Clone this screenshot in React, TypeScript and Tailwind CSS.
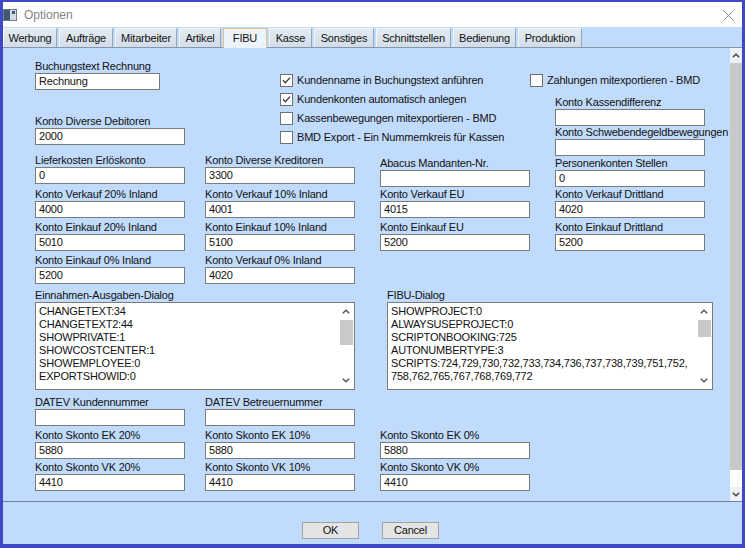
import React from "react";

type FieldProps = { label: string; value?: string; inputW?: string; className?: string };

function Field({ label, value = "", inputW = "w-[150px]", className = "" }: FieldProps) {
  return (
    <div className={`flex flex-col w-[150px] shrink-0 ${className}`}>
      <div className="h-[13px] leading-[13px] whitespace-nowrap">{label}</div>
      <div
        className={`h-[17px] ${inputW} bg-white border border-[#7b7b7b] pl-[3px] leading-[15px] whitespace-nowrap overflow-hidden`}
      >
        {value}
      </div>
    </div>
  );
}

function Check({ label, checked = false }: { label: string; checked?: boolean }) {
  return (
    <div className="flex items-center h-[19px] whitespace-nowrap">
      <div className="w-[13px] h-[13px] bg-white border border-[#707070] flex items-center justify-center shrink-0">
        {checked && (
          <svg width="11" height="11" viewBox="0 0 11 11">
            <path d="M2 5.2 L4.4 7.8 L9 2.6" fill="none" stroke="#3a3a3a" strokeWidth="1.3" />
          </svg>
        )}
      </div>
      <span className="ml-[4px] leading-[13px]">{label}</span>
    </div>
  );
}

function ChevUp({ color = "#505050" }: { color?: string }) {
  return (
    <svg width="8" height="5" viewBox="0 0 8 5">
      <path d="M0.8 4.3 L4 1.2 L7.2 4.3" fill="none" stroke={color} strokeWidth="1.4" />
    </svg>
  );
}
function ChevDown({ color = "#505050" }: { color?: string }) {
  return (
    <svg width="8" height="5" viewBox="0 0 8 5">
      <path d="M0.8 0.7 L4 3.8 L7.2 0.7" fill="none" stroke={color} strokeWidth="1.4" />
    </svg>
  );
}

function TextArea({
  label,
  lines,
  w,
  thumbH,
}: {
  label: string;
  lines: string[];
  w: string;
  thumbH: string;
}) {
  return (
    <div className="flex flex-col shrink-0">
      <div className="h-[13px] leading-[13px] whitespace-nowrap">{label}</div>
      <div className={`h-[88px] ${w} bg-white border border-[#7b7b7b] flex`}>
        <div className="flex-1 pl-[3px] pt-[2px] leading-[13px] overflow-hidden whitespace-nowrap">
          {lines.map((l, i) => (
            <div key={i}>{l}</div>
          ))}
        </div>
        <div className="w-[16px] flex flex-col items-center shrink-0">
          <div className="h-[17px] flex items-center justify-center">
            <ChevUp />
          </div>
          <div className={`${thumbH} w-[13px] bg-[#c9c9c9]`} />
          <div className="flex-1" />
          <div className="h-[17px] flex items-center justify-center">
            <ChevDown />
          </div>
        </div>
      </div>
    </div>
  );
}

const tabs: { name: string; w: string; active?: boolean }[] = [
  { name: "Werbung", w: "w-[54px]" },
  { name: "Aufträge", w: "w-[54px]" },
  { name: "Mitarbeiter", w: "w-[62px]" },
  { name: "Artikel", w: "w-[42px]" },
  { name: "FIBU", w: "w-[44px]", active: true },
  { name: "Kasse", w: "w-[43px]" },
  { name: "Sonstiges", w: "w-[60px]" },
  { name: "Schnittstellen", w: "w-[75px]" },
  { name: "Bedienung", w: "w-[63px]" },
  { name: "Produktion", w: "w-[64px]" },
];

export default function App() {
  return (
    <div className="font-['Liberation_Sans',Arial,sans-serif] text-[11px] tracking-[-0.2px] text-[#111] w-[745px] h-[548px] bg-[#4048c8] pt-[2px] px-[3px] pb-[4px] flex flex-col">
      {/* Title bar */}
      <div className="h-[25px] bg-white flex items-center shrink-0">
        <svg width="14" height="12" viewBox="0 0 14 12">
          <rect x="0.5" y="0.5" width="13" height="11" fill="#d4dde6" stroke="#6c7c8c" />
          <rect x="1" y="1" width="6" height="10" fill="#3e5a72" />
          <rect x="9" y="2" width="3" height="3" fill="#44586a" />
        </svg>
        <span className="ml-[7px] text-[12px] tracking-normal text-[#858585] leading-[14px]">Optionen</span>
        <svg width="11" height="11" viewBox="0 0 11 11" className="ml-auto mr-[8px] mt-[2px]">
          <path d="M0.5 0.5 L10.5 10.5 M10.5 0.5 L0.5 10.5" stroke="#8a8a8a" strokeWidth="1" />
        </svg>
      </div>

      {/* Tab strip */}
      <div className="h-[21px] bg-[#c1dbfc] border-b border-[#8595ab] pt-[1px] flex gap-[2px] shrink-0">
        {tabs.map((t) =>
          t.active ? (
            <div
              key={t.name}
              className={`${t.w} h-[20px] bg-[#edf3fb] border-l border-r border-t border-[#e3c48c] flex items-center justify-center leading-[13px] relative`}
            >
              {t.name}
            </div>
          ) : (
            <div
              key={t.name}
              className={`${t.w} h-[19px] bg-gradient-to-b from-[#e3eaf2] to-[#d3dde8] border-l border-t border-[#f2f5f9] border-r border-r-[#98a6b6] flex items-center justify-center leading-[13px]`}
            >
              {t.name}
            </div>
          )
        )}
      </div>

      {/* Content + scrollbar */}
      <div className="flex h-[453px] bg-[#c1dbfc] shrink-0">
        <div className="flex-1 overflow-hidden pl-[32px] pt-[12px]">
          {/* Top section */}
          <div className="flex h-[94px]">
            <div className="w-[150px] flex flex-col shrink-0">
              <Field label="Buchungstext Rechnung" value="Rechnung" inputW="w-[125px]" />
              <Field label="Konto Diverse Debitoren" value="2000" className="mt-[25px]" />
            </div>
            <div className="ml-[95px] w-[250px] pt-[11px] shrink-0">
              <Check label="Kundenname in Buchungstext anführen" checked />
              <Check label="Kundenkonten automatisch anlegen" checked />
              <Check label="Kassenbewegungen mitexportieren - BMD" />
              <Check label="BMD Export - Ein Nummernkreis für Kassen" />
            </div>
            <div className="pt-[11px] shrink-0">
              <Check label="Zahlungen mitexportieren - BMD" />
              <div className="ml-[25px] mt-[6px]">
                <Field label="Konto Kassendifferenz" />
                <Field label="Konto Schwebendegeldbewegungen" />
              </div>
            </div>
          </div>

          {/* Rows */}
          <div className="flex items-start">
            <Field label="Lieferkosten Erlöskonto" value="0" />
            <Field label="Konto Diverse Kreditoren" value="3300" className="ml-[20px]" />
            <Field label="Abacus Mandanten-Nr." className="ml-[25px] mt-[3px]" />
            <Field label="Personenkonten Stellen" value="0" className="ml-[25px] mt-[3px]" />
          </div>
          <div className="flex mt-[1px]">
            <Field label="Konto Verkauf 20% Inland" value="4000" />
            <Field label="Konto Verkauf 10% Inland" value="4001" className="ml-[20px]" />
            <Field label="Konto Verkauf EU" value="4015" className="ml-[25px]" />
            <Field label="Konto Verkauf Drittland" value="4020" className="ml-[25px]" />
          </div>
          <div className="flex mt-[3px]">
            <Field label="Konto Einkauf 20% Inland" value="5010" />
            <Field label="Konto Einkauf 10% Inland" value="5100" className="ml-[20px]" />
            <Field label="Konto Einkauf EU" value="5200" className="ml-[25px]" />
            <Field label="Konto Einkauf Drittland" value="5200" className="ml-[25px]" />
          </div>
          <div className="flex mt-[3px]">
            <Field label="Konto Einkauf 0% Inland" value="5200" />
            <Field label="Konto Verkauf 0% Inland" value="4020" className="ml-[20px]" />
          </div>

          {/* Text areas */}
          <div className="flex mt-[5px]">
            <TextArea
              label="Einnahmen-Ausgaben-Dialog"
              w="w-[320px]"
              thumbH="h-[25px]"
              lines={[
                "CHANGETEXT:34",
                "CHANGETEXT2:44",
                "SHOWPRIVATE:1",
                "SHOWCOSTCENTER:1",
                "SHOWEMPLOYEE:0",
                "EXPORTSHOWID:0",
              ]}
            />
            <div className="ml-[32px]">
              <TextArea
                label="FIBU-Dialog"
                w="w-[326px]"
                thumbH="h-[17px]"
                lines={[
                  "SHOWPROJECT:0",
                  "ALWAYSUSEPROJECT:0",
                  "SCRIPTONBOOKING:725",
                  "AUTONUMBERTYPE:3",
                  "SCRIPTS:724,729,730,732,733,734,736,737,738,739,751,752,",
                  "758,762,765,767,768,769,772",
                ]}
              />
            </div>
          </div>

          {/* Bottom rows */}
          <div className="flex mt-[6px]">
            <Field label="DATEV Kundennummer" />
            <Field label="DATEV Betreuernummer" className="ml-[20px]" />
          </div>
          <div className="flex mt-[3px]">
            <Field label="Konto Skonto EK 20%" value="5880" />
            <Field label="Konto Skonto EK 10%" value="5880" className="ml-[20px]" />
            <Field label="Konto Skonto EK 0%" value="5880" className="ml-[25px]" />
          </div>
          <div className="flex mt-[2px]">
            <Field label="Konto Skonto VK 20%" value="4410" />
            <Field label="Konto Skonto VK 10%" value="4410" className="ml-[20px]" />
            <Field label="Konto Skonto VK 0%" value="4410" className="ml-[25px]" />
          </div>
        </div>

        {/* Main scrollbar */}
        <div className="w-[12px] flex flex-col bg-[#eef2f7] shrink-0">
          <div className="h-[15px] flex items-center justify-center">
            <ChevUp color="#404040" />
          </div>
          <div className="h-[407px] bg-[#c8c8c8]" />
          <div className="flex-1 bg-white" />
          <div className="h-[14px] flex items-center justify-center">
            <ChevDown color="#404040" />
          </div>
        </div>
      </div>

      {/* Separator */}
      <div className="h-px bg-[#6e7e9c] shrink-0" />

      {/* Buttons */}
      <div className="flex-1 bg-[#c1dbfc] flex items-start pt-[20px] pl-[299px]">
        <button className="w-[57px] h-[17px] bg-[#e4e4e4] border border-[#a3a3a3] leading-[15px] text-[11px] text-[#111]">
          OK
        </button>
        <button className="ml-[23px] w-[57px] h-[17px] bg-[#e4e4e4] border border-[#a3a3a3] leading-[15px] text-[11px] text-[#111]">
          Cancel
        </button>
      </div>
    </div>
  );
}
